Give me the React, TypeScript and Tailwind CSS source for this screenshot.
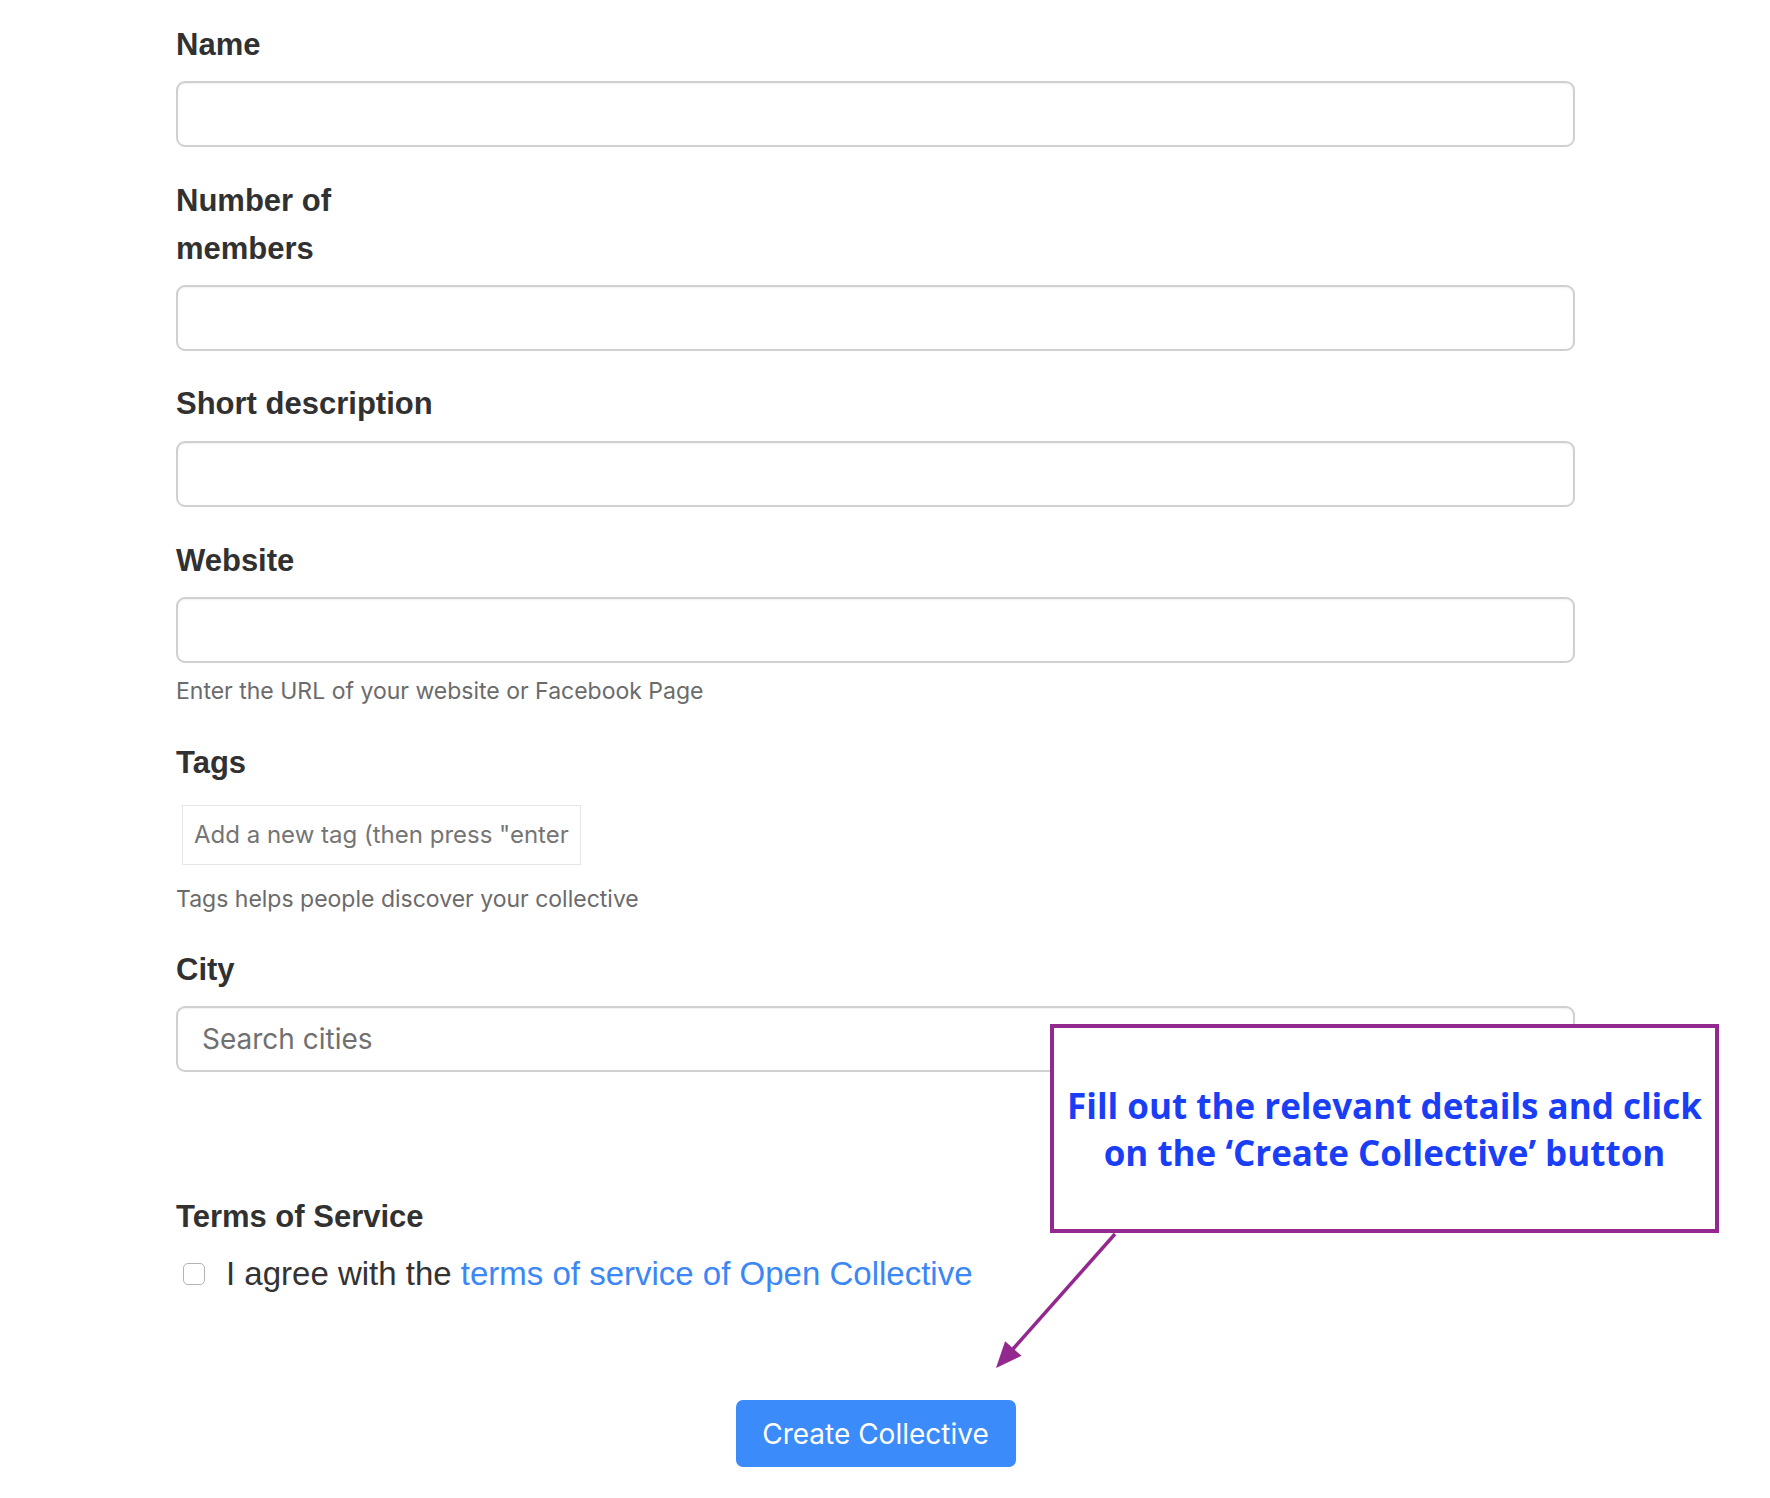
import React from "react";

const labelCls =
  "text-[31px] leading-[48px] font-bold text-[#313131] [font-family:'Liberation_Sans',Arial,sans-serif]";
const inputCls =
  "h-[66px] w-full rounded-[9px] border-2 border-[#d0d0d0] bg-white shadow-[inset_0_1px_2px_rgba(0,0,0,0.06)]";
const helpCls =
  "text-[23px] leading-[33px] text-[#6b6b6b] [font-family:Inter,sans-serif]";

export default function App() {
  return (
    <div className="relative h-[1498px] w-full overflow-hidden bg-white">
      <div className="flex w-[1399px] flex-col pl-0 ml-[176px] pt-[21px]">
        <div className={labelCls}>Name</div>
        <div className={`${inputCls} mt-[12px]`} />

        <div className={`${labelCls} mt-[30px] max-w-[200px]`}>Number of members</div>
        <div className={`${inputCls} mt-[12px]`} />

        <div className={`${labelCls} mt-[29px]`}>Short description</div>
        <div className={`${inputCls} mt-[13px]`} />

        <div className={`${labelCls} mt-[30px]`}>Website</div>
        <div className={`${inputCls} mt-[12px]`} />
        <div className={`${helpCls} mt-[12px]`}>Enter the URL of your website or Facebook Page</div>

        <div className={`${labelCls} mt-[31px]`}>Tags</div>
        <div className="mt-[18px] ml-[6px] flex h-[60px] w-[399px] items-center border border-[#e6e6e6] pl-[11px] pr-[10px]">
          <div className="w-full overflow-hidden">
            <span className="whitespace-nowrap text-[24px] text-[#757575] [font-family:Inter,sans-serif]">
              Add a new tag (then press "enter")
            </span>
          </div>
        </div>
        <div className={`${helpCls} mt-[18px]`}>Tags helps people discover your collective</div>

        <div className={`${labelCls} mt-[30px]`}>City</div>
        <div className={`${inputCls} mt-[12px] flex items-center pl-[24px]`}>
          <span className="text-[28px] text-[#707070] [font-family:Inter,sans-serif]">Search cities</span>
        </div>

        <div className={`${labelCls} mt-[121px]`}>Terms of Service</div>
        <div className="mt-[9px] flex h-[48px] items-center">
          <div className="ml-[7px] h-[22px] w-[22px] rounded-[5px] border-[1.5px] border-[#b3b3b3] bg-white" />
          <span className="ml-[21px] text-[33px] text-[#333] [font-family:'Liberation_Sans',Arial,sans-serif]">
            I agree with the{" "}
            <span className="text-[#3a87f5]">terms of service of Open Collective</span>
          </span>
        </div>

        <div className="mt-[102px] flex justify-center">
          <button className="flex h-[67px] w-[280px] items-center justify-center rounded-[7px] bg-[#3b8bfb] text-[28px] text-white [font-family:Inter,sans-serif]">
            Create Collective
          </button>
        </div>
      </div>

      <div className="absolute left-[1050px] top-[1024px] flex h-[209px] w-[669px] items-center justify-center border-[4px] border-[#93288f] bg-white">
        <div className="text-center text-[35px] font-bold leading-[47px] text-[#1a3ef5] [font-family:'Open_Sans',sans-serif]">
          Fill out the relevant details and click
          <br />
          on the ‘Create Collective’ button
        </div>
      </div>

      <svg
        className="absolute left-[980px] top-[1225px]"
        width="150"
        height="160"
        viewBox="0 0 150 160"
      >
        <line x1="135" y1="9" x2="33" y2="124" stroke="#93288f" strokeWidth="3.5" />
        <polygon points="16,143 41.5,130.8 25.1,116.2" fill="#93288f" />
      </svg>
    </div>
  );
}
